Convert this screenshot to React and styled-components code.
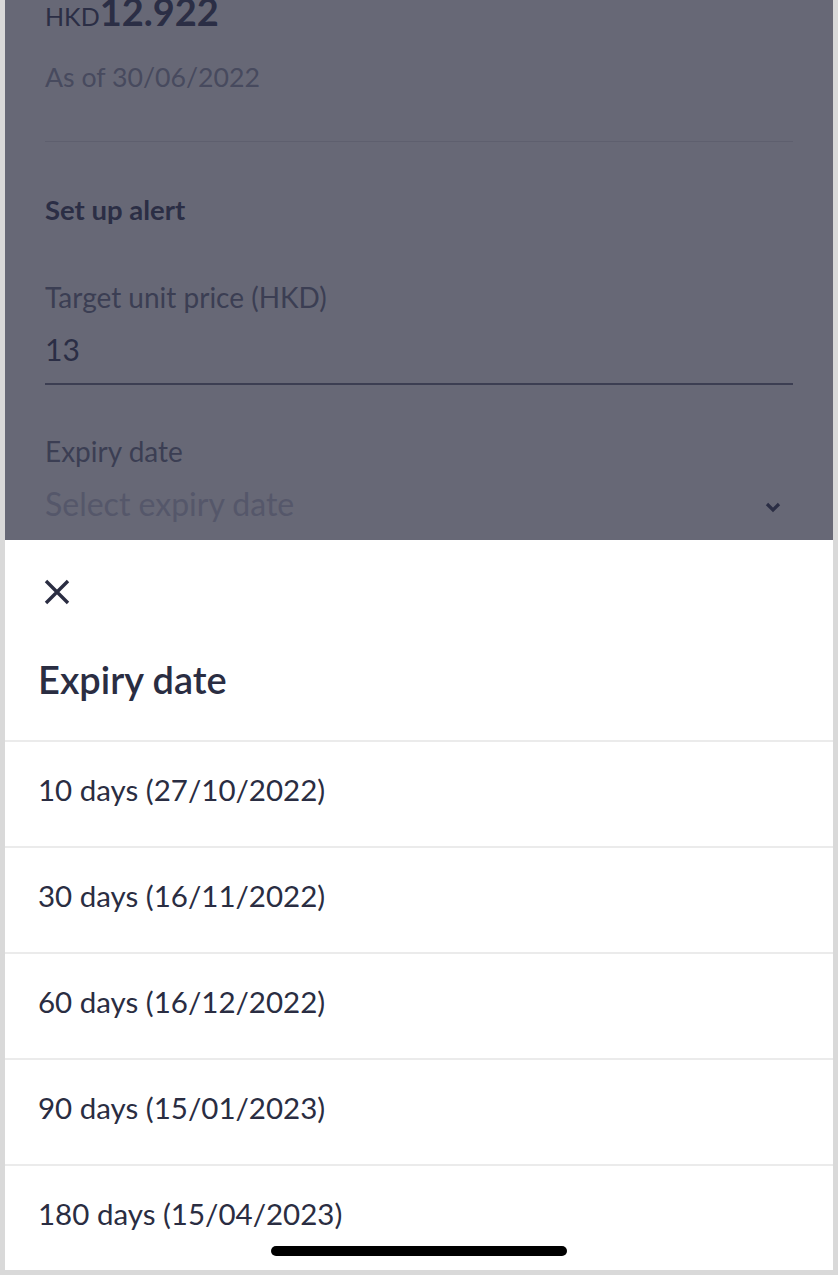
import React from 'react'
import styled, { createGlobalStyle } from 'styled-components'

const GlobalStyle = createGlobalStyle`
  html, body {
    margin: 0;
    padding: 0;
    background: #d9d9d9;
  }
  body {
    font-family: Lato, "Noto Sans", "Liberation Sans", sans-serif;
    -webkit-font-smoothing: antialiased;
  }
`

const Screen = styled.div`
  width: 828px;
  height: 1270px;
  margin-left: 5px;
  display: flex;
  flex-direction: column;
  overflow: hidden;
  position: relative;
`

const DimmedPage = styled.div`
  flex: 0 0 540px;
  background: #676876;
  padding: 0 40px;
  box-sizing: border-box;
  overflow: hidden;
  display: flex;
  flex-direction: column;
`

const PriceLine = styled.div`
  display: flex;
  align-items: baseline;
  margin-top: -12px;
  height: 40px;
  color: #2b2e45;
`

const Currency = styled.span`
  font-size: 25px;
`

const Price = styled.span`
  font-size: 38px;
  font-weight: 700;
`

const AsOf = styled.div`
  margin-top: 33px;
  font-size: 26.7px;
  color: #474a5e;
`

const Divider = styled.hr`
  border: 0;
  height: 1px;
  background: #5e5f6e;
  margin: 48px 0 0;
`

const SectionTitle = styled.div`
  margin-top: 51px;
  font-size: 27.5px;
  font-weight: 700;
  color: #2b2e45;
`

const FieldLabel = styled.div`
  margin-top: ${p => p.$gap}px;
  font-size: 28px;
  color: #3b3e53;
`

const FieldValue = styled.div`
  margin-top: 17px;
  font-size: 30px;
  color: #2b2e45;
  padding-bottom: 16px;
  border-bottom: 2px solid #3c3e52;
`

const SelectRow = styled.div`
  margin-top: 16px;
  display: flex;
  align-items: center;
  justify-content: space-between;
  padding-right: 12px;
`

const Placeholder = styled.span`
  font-size: 32px;
  color: #55576a;
`

const ChevronBox = styled.span`
  display: flex;
  padding-top: 6px;
`

const Sheet = styled.div`
  flex: 1;
  background: #ffffff;
  display: flex;
  flex-direction: column;
  position: relative;
`

const CloseButton = styled.button`
  margin: 38px 0 0 38px;
  width: 28px;
  height: 28px;
  padding: 0;
  border: 0;
  background: none;
  display: flex;
  align-items: center;
  justify-content: center;
  color: #2a2d42;
`

const SheetTitle = styled.h2`
  margin: 50px 0 0;
  padding: 0 0 38px 33px;
  font-size: 38px;
  font-weight: 600;
  color: #2a2d42;
  border-bottom: 2px solid #ebebeb;
`

const OptionList = styled.ul`
  list-style: none;
  margin: 0;
  padding: 0;
`

const Option = styled.li`
  height: 95px;
  padding: 0 0 9px 33px;
  display: flex;
  align-items: center;
  font-size: 29.5px;
  color: #2a2d42;
  border-bottom: 2px solid #ebebeb;
`

const HomeIndicator = styled.div`
  position: absolute;
  left: 266px;
  bottom: 16px;
  width: 296px;
  height: 10px;
  border-radius: 5px;
  background: #000;
`

const options = [
  '10 days (27/10/2022)',
  '30 days (16/11/2022)',
  '60 days (16/12/2022)',
  '90 days (15/01/2023)',
  '180 days (15/04/2023)',
]

function Chevron() {
  return (
    <svg width="16" height="12" viewBox="0 0 16 12">
      <path d="M2 3l6 6 6-6" fill="none" stroke="#2b2e45" strokeWidth="3.2" />
    </svg>
  )
}

function CloseIcon() {
  return (
    <svg width="26" height="26" viewBox="0 0 26 26">
      <path d="M2 2l22 22M24 2L2 24" stroke="currentColor" strokeWidth="3.4" />
    </svg>
  )
}

function App() {
  return (
    <>
      <GlobalStyle />
      <Screen>
        <DimmedPage>
          <PriceLine>
            <Currency>HKD</Currency>
            <Price>12.922</Price>
          </PriceLine>
          <AsOf>As of 30/06/2022</AsOf>
          <Divider />
          <SectionTitle>Set up alert</SectionTitle>
          <FieldLabel $gap={54}>Target unit price (HKD)</FieldLabel>
          <FieldValue>13</FieldValue>
          <FieldLabel $gap={49}>Expiry date</FieldLabel>
          <SelectRow>
            <Placeholder>Select expiry date</Placeholder>
            <ChevronBox>
              <Chevron />
            </ChevronBox>
          </SelectRow>
        </DimmedPage>
        <Sheet>
          <CloseButton aria-label="Close">
            <CloseIcon />
          </CloseButton>
          <SheetTitle>Expiry date</SheetTitle>
          <OptionList>
            {options.map(o => (
              <Option key={o}>{o}</Option>
            ))}
          </OptionList>
          <HomeIndicator />
        </Sheet>
      </Screen>
    </>
  )
}

export default App
